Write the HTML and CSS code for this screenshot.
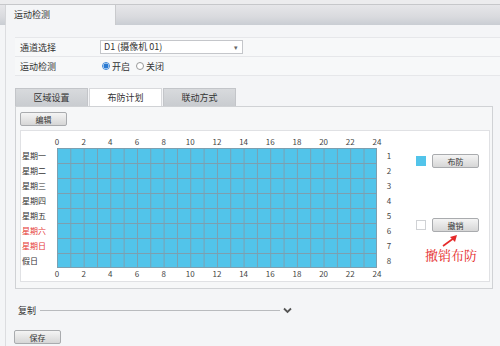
FILE: index.html
```html
<!DOCTYPE html>
<html lang="zh-CN">
<head>
  <meta charset="UTF-8">
  <title>运动检测</title>
  <link rel="stylesheet" href="styles.css">
</head>
<body>

  <div class="topbar"></div>
  <div class="tabstrip">
    <div class="maintab">运动检测</div>
  </div>

  <div class="page">
    <div class="form">
      <div class="row">
        <span class="label">通道选择</span>
        <div class="select">D1 (摄像机 01)<span class="caret">▾</span></div>
      </div>
      <div class="row">
        <span class="label">运动检测</span>
        <span class="radio on"></span><span class="opt">开启</span>
        <span class="radio"></span><span class="opt">关闭</span>
      </div>
    </div>

    <div class="tabs">
      <div class="tab">区域设置</div>
      <div class="tab active">布防计划</div>
      <div class="tab">联动方式</div>
    </div>

    <div class="panel">
      <button class="btn edit">编辑</button>
      <div class="sched">
        <div class="days">
          <span>星期一</span>
          <span>星期二</span>
          <span>星期三</span>
          <span>星期四</span>
          <span>星期五</span>
          <span class="red">星期六</span>
          <span class="red">星期日</span>
          <span>假日</span>
        </div>
        <div class="chart">
          <div class="hours">
            <span>0</span><span>2</span><span>4</span><span>6</span><span>8</span><span>10</span><span>12</span>
            <span>14</span><span>16</span><span>18</span><span>20</span><span>22</span><span>24</span>
          </div>
          <div class="grid"></div>
          <div class="hours">
            <span>0</span><span>2</span><span>4</span><span>6</span><span>8</span><span>10</span><span>12</span>
            <span>14</span><span>16</span><span>18</span><span>20</span><span>22</span><span>24</span>
          </div>
        </div>
        <div class="nums">
          <span>1</span><span>2</span><span>3</span><span>4</span>
          <span>5</span><span>6</span><span>7</span><span>8</span>
        </div>
        <div class="legend">
          <div class="item">
            <span class="swatch blue"></span>
            <button class="btn small">布防</button>
          </div>
          <div class="item second">
            <span class="swatch"></span>
            <button class="btn small">撤销</button>
          </div>
          <svg class="arrow" width="20" height="14" viewBox="0 0 20 14">
            <line x1="3" y1="12" x2="14" y2="4" stroke="#e52a2a" stroke-width="1.6"/>
            <polygon points="17,1 10,3 15,8" fill="#e52a2a"/>
          </svg>
          <div class="note">撤销布防</div>
        </div>
      </div>
    </div>

    <div class="copy">
      <span>复制</span>
      <span class="rule"></span>
      <svg width="9" height="7" viewBox="0 0 9 7"><path d="M1 1.5 L4.5 5 L8 1.5" fill="none" stroke="#555" stroke-width="1.8"/></svg>
    </div>

    <button class="btn save">保存</button>
  </div>

</body>
</html>
```

FILE: styles.css
```css
* {
  margin: 0;
  padding: 0;
  box-sizing: border-box;
}

body {
  width: 500px;
  height: 346px;
  overflow: hidden;
  background: #f4f5f7;
  font-family: "Noto Sans CJK SC", "Noto Sans", sans-serif;
  font-size: 9px;
  color: #333;
}

.topbar {
  height: 5px;
  background: #ececee;
  border-bottom: 1px solid #c6c7ca;
}

.tabstrip {
  height: 20px;
  background: linear-gradient(#e6e6e9, #d9dade 60%, #c9cdd3);
  padding-left: 5px;
}

.maintab {
  width: 111px;
  height: 20px;
  background: #f4f5f7;
  border-left: 1px solid #d4d5d8;
  border-right: 1px solid #c9cacd;
  padding-left: 8px;
  line-height: 19px;
  font-size: 9px;
  color: #333;
}

.page {
  margin-left: 5px;
  border-left: 1px solid #dcdde0;
  padding: 12px 7px 0 9px;
  height: 321px;
}

.form {
  border-top: 1px solid #e6e7ea;
  margin-right: -7px;
}

.row {
  display: flex;
  align-items: center;
  height: 19px;
  border-bottom: 1px solid #e6e7ea;
  background: #f7f8f9;
}

.label {
  width: 85px;
  padding-left: 5px;
}

.select {
  position: relative;
  width: 143px;
  height: 14px;
  background: #fff;
  border: 1px solid #c4c6ca;
  padding-left: 3px;
  line-height: 12px;
}

.caret {
  position: absolute;
  right: 4px;
  top: 0;
  font-size: 7px;
  color: #666;
}

.radio {
  width: 8px;
  height: 8px;
  border-radius: 50%;
  border: 1px solid #999;
  background: #fff;
  margin-left: 2px;
}

.radio.on {
  border-color: #3a86d8;
  background: radial-gradient(circle, #2a7ad2 2.2px, #fff 2.8px);
}

.opt {
  margin: 0 4px 0 2px;
}

.tabs {
  display: flex;
  margin-top: 12px;
  height: 18px;
}

.tab {
  width: 73px;
  height: 18px;
  line-height: 18px;
  text-align: center;
  background: linear-gradient(#d8dadd, #c9ccd0);
  border: 1px solid #c3c5c9;
  border-bottom: none;
  margin-right: 1px;
}

.tab.active {
  background: #fff;
  border-color: #d8d9dc;
}

.panel {
  height: 183px;
  border: 1px solid #d0d2d5;
  background: #f6f7f8;
  padding: 5px 2px 0 4px;
}

.btn {
  font-family: "Noto Sans CJK SC", "Noto Sans", sans-serif;
  font-size: 8px;
  color: #333;
  background: linear-gradient(#f4f4f4, #d6d6d6);
  border: 1px solid #a9abae;
  border-radius: 2px;
}

.edit {
  display: block;
  width: 47px;
  height: 14px;
}

.sched {
  display: flex;
  margin-top: 4px;
  height: 152px;
  background: #fff;
  border: 1px solid #e0e1e4;
  padding-top: 5px;
}

.days {
  width: 36px;
  padding-top: 12px;
  display: flex;
  flex-direction: column;
  padding-left: 1px;
  font-size: 8px;
}

.days span {
  height: 15px;
  line-height: 15px;
}

.red {
  color: #e53935;
}

.chart {
  width: 320px;
}

.hours {
  display: flex;
  height: 12px;
  margin-left: -13.3px;
  line-height: 11px;
  font-size: 8px;
  color: #444;
}

.hours span {
  width: 26.67px;
  text-align: center;
  flex: none;
}

.grid {
  height: 120px;
  background-color: #52c4ea;
  background-image:
    linear-gradient(to right, #7c9fb0 1px, transparent 1px),
    linear-gradient(to bottom, #7c9fb0 1px, transparent 1px);
  background-size: 13.333px 15px;
  border-right: 1px solid #7c9fb0;
  border-bottom: 1px solid #7c9fb0;
}

.nums {
  width: 24px;
  padding-top: 12px;
  display: flex;
  flex-direction: column;
  align-items: center;
  font-size: 8px;
  color: #444;
}

.nums span {
  height: 15px;
  line-height: 15px;
}

.legend {
  margin-left: 15px;
  padding-top: 18px;
  display: flex;
  flex-direction: column;
}

.item {
  display: flex;
  align-items: center;
  height: 14px;
}

.item.second {
  margin-top: 50px;
}

.swatch {
  width: 10px;
  height: 10px;
  border: 1px solid #d0d2d5;
  background: #fff;
  margin-right: 6px;
}

.swatch.blue {
  background: #52c4ea;
  border-color: #52c4ea;
}

.small {
  width: 47px;
  height: 14px;
}

.arrow {
  margin: 2px 0 0 24px;
}

.note {
  margin: 0 0 0 9px;
  font-size: 13px;
  line-height: 14px;
  color: #e52a2a;
  font-family: "Noto Serif CJK SC", "Noto Sans CJK SC", serif;
}

.copy {
  display: flex;
  align-items: center;
  margin-top: 14px;
  height: 14px;
  padding-left: 3px;
}

.rule {
  width: 240px;
  height: 1px;
  background: #b9bbbe;
  margin: 0 3px 0 4px;
}

.save {
  display: block;
  margin-top: 13px;
  margin-left: -1px;
  width: 47px;
  height: 14px;
}
```
